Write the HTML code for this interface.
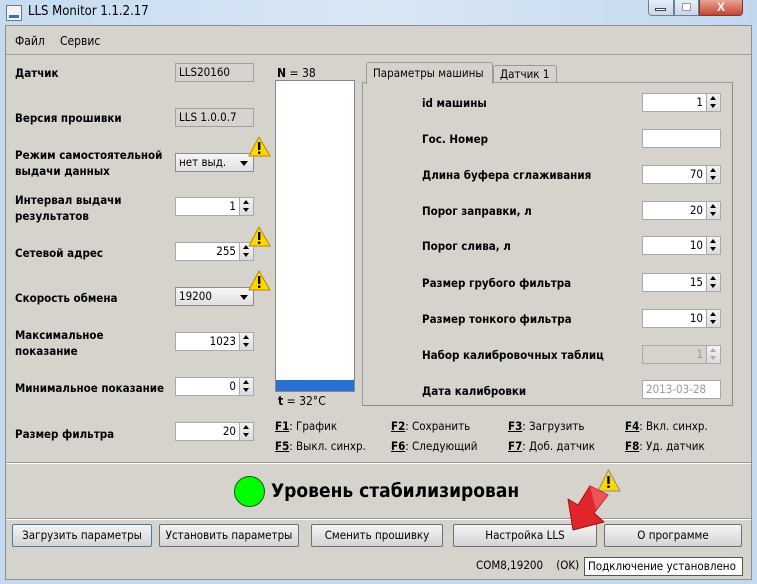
<!DOCTYPE html>
<html><head><meta charset="utf-8"><style>
*{box-sizing:border-box;margin:0;padding:0}
body{width:757px;height:584px;position:relative;overflow:hidden;background:#c4d8ee;font-family:"Liberation Sans","DejaVu Sans",sans-serif;font-size:12px;color:#000}
.a{position:absolute}
.lb{position:absolute;font-weight:bold;font-size:11.5px;line-height:16px;font-family:"DejaVu Sans Condensed","Liberation Sans",sans-serif}
.fld{position:absolute;height:19px;background:#fff;border:1px solid #a9a9a9;font-family:"DejaVu Sans Condensed","Liberation Sans Narrow",sans-serif;font-size:11.5px;line-height:17px;padding:0 3px}
.ro{background:#d6d3ce;border-color:#a0a0a0}
.num{text-align:right;padding-right:17px}
.sp{position:absolute;right:0;top:0;width:14px;height:17px;border-left:1px solid #a9a9a9;background:linear-gradient(#f4f4f4,#dcdcdc)}
.sp:before{content:"";position:absolute;left:3px;top:2px;border:3.5px solid transparent;border-bottom:4px solid #000;border-top:0}
.sp:after{content:"";position:absolute;left:3px;top:10px;border:3.5px solid transparent;border-top:4px solid #000;border-bottom:0}
.dis{color:#999}.dis .sp:before{border-bottom-color:#aaa}.dis .sp:after{border-top-color:#aaa}
.cb{position:absolute;height:19px;border:1px solid #8c8c8c;background:linear-gradient(#f6f6f6,#e0e0e0);font-size:11.5px;line-height:17px;padding-left:3px;font-family:"DejaVu Sans Condensed","Liberation Sans",sans-serif}
.cb:after{content:"";position:absolute;right:5px;top:7px;border:4px solid transparent;border-top:5px solid #000;border-bottom:0}
.fk{position:absolute;font-size:11.5px;font-family:"DejaVu Sans Condensed","Liberation Sans",sans-serif}
.fk b{text-decoration:underline}
.btn{position:absolute;top:524px;height:23px;border:1px solid #707070;border-radius:2px;background:linear-gradient(#f4f4f4,#e4e4e4 50%,#d4d4d4);text-align:center;line-height:21px;font-size:11.5px;font-family:"DejaVu Sans Condensed","Liberation Sans",sans-serif}
</style></head><body>
<div class="a" style="left:0;top:0;width:757px;height:26px;background:linear-gradient(90deg,#c6dbf1,#d9e7f5 50%,#c2d7ee)"></div>
<div class="a" style="left:6px;top:5px;width:16px;height:16px;border:1px solid #777;background:#f3f3f3"></div>
<div class="a" style="left:9px;top:15px;width:10px;height:3px;background:#3a6fb0"></div>
<div class="a" style="left:28px;top:4px;font-size:13px;font-family:'DejaVu Sans Condensed','Liberation Sans',sans-serif">LLS Monitor 1.1.2.17</div>
<div class="a" style="left:648px;top:0;width:26px;height:16px;border:1px solid #6d7f96;border-top:0;border-radius:0 0 0 4px;background:linear-gradient(#e6eef8,#c8d6e8)"></div>
<div class="a" style="left:655px;top:8px;width:11px;height:3px;border:1px solid #444;background:#fff"></div>
<div class="a" style="left:674px;top:0;width:25px;height:16px;border:1px solid #6d7f96;border-top:0;background:linear-gradient(#e6eef8,#c8d6e8)"></div>
<div class="a" style="left:682px;top:3px;width:9px;height:8px;border:1px solid #999;background:#fff"></div>
<div class="a" style="left:699px;top:0;width:44px;height:16px;border:1px solid #7a3a30;border-top:0;border-radius:0 0 4px 0;background:linear-gradient(#e8a597,#c8432e);color:#fff;font-weight:bold;text-align:center;line-height:14px;font-size:12px">X</div>
<div class="a" style="left:5px;top:25px;width:747px;height:555px;background:#d6d3cc;border:1px solid #8a8f99"></div>
<div class="a" style="left:15px;top:34px;font-size:12px;font-family:'DejaVu Sans Condensed','Liberation Sans',sans-serif">Файл</div>
<div class="a" style="left:60px;top:34px;font-size:12px;font-family:'DejaVu Sans Condensed','Liberation Sans',sans-serif">Сервис</div>
<div class="a" style="left:6px;top:54px;width:745px;height:1px;background:#a0a0a0"></div>

<div class="lb" style="left:15px;top:65px">Датчик</div>
<div class="fld ro" style="left:175px;top:63px;width:79px">LLS20160</div>
<div class="lb" style="left:15px;top:110px">Версия прошивки</div>
<div class="fld ro" style="left:175px;top:108px;width:79px">LLS 1.0.0.7</div>
<div class="lb" style="left:15px;top:147px">Режим самостоятельной<br>выдачи данных</div>
<div class="cb" style="left:175px;top:153px;width:79px">нет выд.</div>
<div class="lb" style="left:15px;top:192px">Интервал выдачи<br>результатов</div>
<div class="fld num" style="left:175px;top:197px;width:79px">1<div class="sp"></div></div>
<div class="lb" style="left:15px;top:245px">Сетевой адрес</div>
<div class="fld num" style="left:175px;top:242px;width:79px">255<div class="sp"></div></div>
<div class="lb" style="left:15px;top:290px">Скорость обмена</div>
<div class="cb" style="left:175px;top:287px;width:79px">19200</div>
<div class="lb" style="left:15px;top:327px">Максимальное<br>показание</div>
<div class="fld num" style="left:175px;top:332px;width:79px">1023<div class="sp"></div></div>
<div class="lb" style="left:15px;top:380px">Минимальное показание</div>
<div class="fld num" style="left:175px;top:377px;width:79px">0<div class="sp"></div></div>
<div class="lb" style="left:15px;top:426px">Размер фильтра</div>
<div class="fld num" style="left:175px;top:422px;width:79px">20<div class="sp"></div></div>

<svg class="a" style="left:248px;top:136px" width="24" height="22"><path d="M11 1 L22 20 L1 20 Z" fill="#ffd800" stroke="#b08a00" stroke-linejoin="round"/><rect x="10" y="6" width="2.4" height="8" fill="#000"/><rect x="10" y="15.5" width="2.4" height="2.4" fill="#000"/></svg>
<svg class="a" style="left:248px;top:226px" width="24" height="22"><path d="M11 1 L22 20 L1 20 Z" fill="#ffd800" stroke="#b08a00" stroke-linejoin="round"/><rect x="10" y="6" width="2.4" height="8" fill="#000"/><rect x="10" y="15.5" width="2.4" height="2.4" fill="#000"/></svg>
<svg class="a" style="left:248px;top:270px" width="24" height="22"><path d="M11 1 L22 20 L1 20 Z" fill="#ffd800" stroke="#b08a00" stroke-linejoin="round"/><rect x="10" y="6" width="2.4" height="8" fill="#000"/><rect x="10" y="15.5" width="2.4" height="2.4" fill="#000"/></svg>

<div class="a" style="left:277px;top:66px;font-size:12px;font-family:'DejaVu Sans Condensed',sans-serif"><b>N</b> = 38</div>
<div class="a" style="left:275px;top:80px;width:80px;height:312px;background:#fff;border:1px solid #888"></div>
<div class="a" style="left:276px;top:380px;width:78px;height:11px;background:#2a6fd3"></div>
<div class="a" style="left:278px;top:394px;font-size:12px;font-family:'DejaVu Sans Condensed',sans-serif"><b>t</b> = 32°C</div>

<div class="a" style="left:362px;top:82px;width:371px;height:324px;border:1px solid #999;border-right-color:#888;border-bottom-color:#888"></div>
<div class="a" style="left:366px;top:62px;width:127px;height:22px;border:1px solid #999;border-bottom:0;border-radius:3px 3px 0 0;background:#d6d3cc;font-size:11.5px;line-height:21px;padding-left:6px;font-family:'DejaVu Sans Condensed',sans-serif">Параметры машины</div>
<div class="a" style="left:493px;top:65px;width:64px;height:18px;border:1px solid #999;border-bottom:0;border-radius:3px 3px 0 0;font-size:11.5px;line-height:17px;padding-left:6px;font-family:'DejaVu Sans Condensed',sans-serif">Датчик 1</div>

<div class="lb" style="left:422px;top:95px">id машины</div>
<div class="fld num" style="left:642px;top:93px;width:79px">1<div class="sp"></div></div>
<div class="lb" style="left:422px;top:131px">Гос. Номер</div>
<div class="fld" style="left:642px;top:129px;width:79px"></div>
<div class="lb" style="left:422px;top:167px">Длина буфера сглаживания</div>
<div class="fld num" style="left:642px;top:165px;width:79px">70<div class="sp"></div></div>
<div class="lb" style="left:422px;top:203px">Порог заправки, л</div>
<div class="fld num" style="left:642px;top:201px;width:79px">20<div class="sp"></div></div>
<div class="lb" style="left:422px;top:238px">Порог слива, л</div>
<div class="fld num" style="left:642px;top:236px;width:79px">10<div class="sp"></div></div>
<div class="lb" style="left:422px;top:275px">Размер грубого фильтра</div>
<div class="fld num" style="left:642px;top:273px;width:79px">15<div class="sp"></div></div>
<div class="lb" style="left:422px;top:311px">Размер тонкого фильтра</div>
<div class="fld num" style="left:642px;top:309px;width:79px">10<div class="sp"></div></div>
<div class="lb" style="left:422px;top:347px">Набор калибровочных таблиц</div>
<div class="fld num dis" style="left:642px;top:345px;width:79px;background:#d6d3cc">1<div class="sp"></div></div>
<div class="lb" style="left:422px;top:383px">Дата калибровки</div>
<div class="fld dis" style="left:642px;top:380px;width:79px;background:#fff">2013-03-28</div>

<div class="fk" style="left:275px;top:419px"><b>F1</b>: График</div>
<div class="fk" style="left:391px;top:419px"><b>F2</b>: Сохранить</div>
<div class="fk" style="left:508px;top:419px"><b>F3</b>: Загрузить</div>
<div class="fk" style="left:625px;top:419px"><b>F4</b>: Вкл. синхр.</div>
<div class="fk" style="left:275px;top:439px"><b>F5</b>: Выкл. синхр.</div>
<div class="fk" style="left:391px;top:439px"><b>F6</b>: Следующий</div>
<div class="fk" style="left:508px;top:439px"><b>F7</b>: Доб. датчик</div>
<div class="fk" style="left:625px;top:439px"><b>F8</b>: Уд. датчик</div>

<div class="a" style="left:6px;top:462px;width:745px;height:2px;border-top:1px solid #999;border-bottom:1px solid #fff"></div>
<div class="a" style="left:234px;top:476px;width:31px;height:31px;border-radius:50%;background:#0f0;border:1px solid #060"></div>
<div class="a" style="left:271px;top:480px;font-size:19px;font-weight:bold;font-family:'DejaVu Sans Condensed','Liberation Sans',sans-serif">Уровень стабилизирован</div>
<svg class="a" style="left:597px;top:469px" width="24" height="24"><path d="M11.5 1 L23 22 L1 22 Z" fill="#ffd800" stroke="#8a8a8a" stroke-linejoin="round"/><rect x="10.3" y="7" width="2.4" height="8" fill="#000"/><rect x="10.3" y="16.5" width="2.4" height="2.4" fill="#000"/></svg>
<div class="a" style="left:6px;top:518px;width:745px;height:2px;border-top:1px solid #999;border-bottom:1px solid #fff"></div>

<div class="btn" style="left:12px;width:140px;border-color:#3c7fb1">Загрузить параметры</div>
<div class="btn" style="left:159px;width:140px">Установить параметры</div>
<div class="btn" style="left:311px;width:132px">Сменить прошивку</div>
<div class="btn" style="left:453px;width:144px">Настройка LLS</div>
<div class="btn" style="left:604px;width:138px">О программе</div>

<svg class="a" style="left:560px;top:480px" width="60" height="60"><path d="M13 50 L8 19 L18 25 L30 6 L48 15 L34 33 L44 42 Z" fill="#e0262b" stroke="#a01015" stroke-width="1" stroke-linejoin="round"/><path d="M30 6 L48 15 L36 30 Z" fill="#f06a6c" opacity=".7"/></svg>

<div class="a" style="left:476px;top:558px;font-size:11.5px;font-family:'DejaVu Sans Condensed',sans-serif">COM8,19200&nbsp;&nbsp;&nbsp;&nbsp;(OK)</div>
<div class="a" style="left:584px;top:557px;width:159px;height:19px;background:#fff;border:1px solid #555;font-size:11.5px;line-height:17px;padding-left:3px;font-family:'DejaVu Sans Condensed',sans-serif">Подключение установлено</div>
</body></html>
